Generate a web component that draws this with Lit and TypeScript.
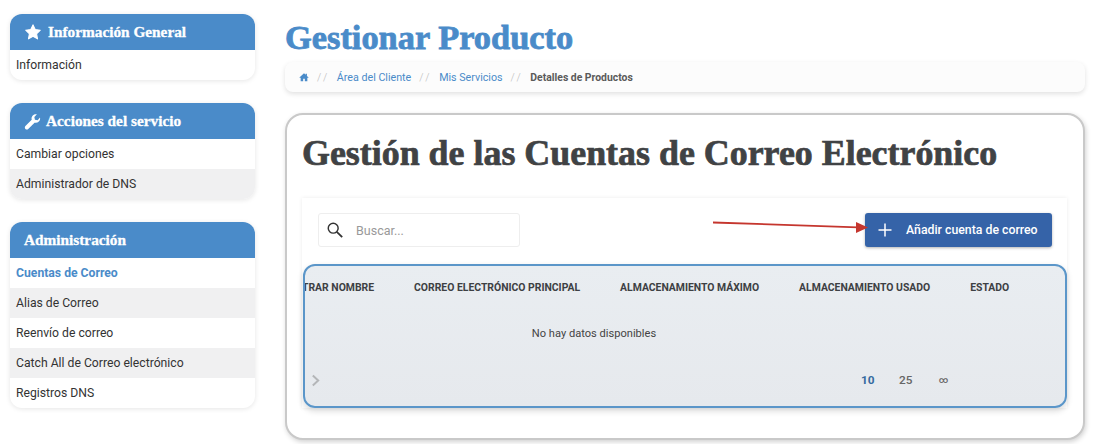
import { LitElement, css, html } from "lit";
import { customElement } from "lit/decorators.js";

interface SideGroup {
  title: string;
  icon?: "star" | "wrench";
  links: string[];
  active?: string;
}

const groups: SideGroup[] = [
  { title: "Información General", icon: "star", links: ["Información"] },
  {
    title: "Acciones del servicio",
    icon: "wrench",
    links: ["Cambiar opciones", "Administrador de DNS"],
  },
  {
    title: "Administración",
    links: [
      "Cuentas de Correo",
      "Alias de Correo",
      "Reenvío de correo",
      "Catch All de Correo electrónico",
      "Registros DNS",
    ],
    active: "Cuentas de Correo",
  },
];

const columns = [
  "REGISTRAR NOMBRE",
  "CORREO ELECTRÓNICO PRINCIPAL",
  "ALMACENAMIENTO MÁXIMO",
  "ALMACENAMIENTO USADO",
  "ESTADO",
];

const starIcon = html`<svg class="head-icon" viewBox="0 0 24 24" width="18" height="18">
  <path fill="#fff" stroke="#fff" stroke-width="1.5" stroke-linejoin="round" d="M12 2.5l2.9 6.3 6.8.8-5 4.7 1.3 6.8-6-3.4-6 3.4 1.3-6.8-5-4.7 6.8-.8z" />
</svg>`;

const wrenchIcon = html`<svg class="head-icon wrench" viewBox="0 0 24 24" width="17" height="17">
  <path fill="#fff" d="M22.6 6.2c.5 2.2-.1 4.4-1.7 5.9-1.6 1.6-3.9 2.1-6 1.5L6 22.5c-1.1 1.1-2.9 1.1-4 0s-1.1-2.9 0-4l8.9-8.9c-.6-2.1-.1-4.400 1.500-6 1.500-1.600 3.700-2.200 5.900-1.700l-3.700 3.700.8 3.900 3.900.8z" />
</svg>`;

@customElement("app-root")
export class AppRoot extends LitElement {
  static styles = css`
    :host {
      display: block;
      width: 1094px;
      height: 444px;
      overflow: hidden;
      background: #fff;
      color: #333;
      font-family: Roboto, "Liberation Sans", sans-serif;
    }

    .page {
      display: grid;
      grid-template-columns: 245px 800px;
      column-gap: 30px;
      padding: 14px 0 0 10px;
    }

    .sidebar {
      display: flex;
      flex-direction: column;
      gap: 23px;
    }

    .side-card {
      border-radius: 12px;
      overflow: hidden;
      background: #fff;
      box-shadow: 0 1px 5px rgb(0 0 0 / 10%);
    }

    .side-head {
      display: flex;
      align-items: center;
      gap: 6px;
      height: 36px;
      padding-left: 14px;
      background: #4a8bc9;
      color: #fff;
      font-family: "Liberation Serif", serif;
      font-size: 15.3px;
      font-weight: 700;
      -webkit-text-stroke: 0.3px #fff;
    }

    .head-icon {
      flex: none;
    }

    .wrench {
      margin-right: -1px;
    }

    .side-link {
      display: flex;
      align-items: center;
      height: 30px;
      padding-left: 6px;
      font-size: 12.2px;
      color: #333;
    }

    .side-link:nth-child(even) {
      background: #f0f0f1;
    }

    .side-link.active {
      color: #4a8bc9;
      font-weight: 700;
    }

    .title {
      margin: 0;
      height: 48px;
      line-height: 46px;
      color: #4a8bc9;
      font-family: "Liberation Serif", serif;
      font-size: 34.4px;
      font-weight: 700;
      -webkit-text-stroke: 0.8px #4a8bc9;
    }

    .crumbs {
      display: flex;
      align-items: center;
      height: 30px;
      padding-left: 14px;
      border-radius: 8px;
      background: #fcfcfc;
      box-shadow: 0 2px 5px rgb(0 0 0 / 12%);
      font-size: 10.7px;
      color: #4a8bc9;
    }

    .crumbs .sep {
      margin: 0 6.5px 0 8px;
      color: #bbb;
      letter-spacing: 3px;
      font-weight: 300;
    }

    .crumbs .current {
      color: #5a5a5a;
      font-size: 10.4px;
      font-weight: 700;
    }

    .card {
      box-sizing: border-box;
      height: 327px;
      margin-top: 21px;
      padding: 20px 17px 0 15px;
      border: 2px solid #c9c9c9;
      border-radius: 18px;
      background: #fff;
      box-shadow: 1px 2px 5px rgb(0 0 0 / 18%);
    }

    .card-title {
      margin: 0;
      height: 63px;
      line-height: 36px;
      color: #404244;
      font-family: "Liberation Serif", serif;
      font-size: 35.9px;
      font-weight: 700;
      white-space: nowrap;
      -webkit-text-stroke: 0.7px #404244;
    }

    .panel {
      position: relative;
      box-shadow: 0 0 4px rgb(0 0 0 / 8%);
      margin-right: -1px;
    }

    .toolbar {
      display: flex;
      align-items: center;
      justify-content: space-between;
      height: 64px;
      padding: 0 15px 1px 16px;
    }

    .search {
      display: flex;
      align-items: center;
      box-sizing: border-box;
      width: 202px;
      height: 34px;
      padding-left: 7px;
      border: 1px solid #eee;
      border-radius: 3px;
      color: #999;
      font-size: 12.5px;
    }

    .search svg {
      margin-right: 12px;
    }

    .add-btn {
      display: flex;
      align-items: center;
      box-sizing: border-box;
      width: 187px;
      height: 34px;
      padding-left: 12px;
      border-radius: 3px;
      background: #3563a8;
      color: #fff;
      font-size: 12.3px;
      font-weight: 500;
      box-shadow: 0 1px 3px rgb(0 0 0 / 30%);
    }

    .add-btn svg {
      margin-right: 13px;
    }

    .arrow {
      position: absolute;
      left: 411px;
      top: 20px;
    }

    .table {
      box-sizing: border-box;
      height: 144px;
      margin-top: 1px;
      margin-left: 1px;
      border: 2px solid #5b96c9;
      border-radius: 12px;
      background: linear-gradient(180deg, #e9edf1, #e6e9ed);
      box-shadow: 0 3px 6px rgb(0 0 0 / 15%);
      overflow: hidden;
    }

    .head-row {
      display: flex;
      align-items: center;
      height: 42px;
      margin-left: -32px;
      color: #3d4043;
      font-size: 10.4px;
      font-weight: 700;
      white-space: nowrap;
    }

    .head-row span {
      flex: none;
      margin-right: 40px;
    }

    .empty {
      height: 51px;
      line-height: 52px;
      padding-right: 182px;
      text-align: center;
      font-size: 11.1px;
      color: #444;
    }

    .pager {
      display: flex;
      align-items: center;
      height: 42px;
      padding-left: 6px;
      font-size: 11.8px;
      font-weight: 500;
      color: #666;
    }

    .pager .sizes {
      display: flex;
      align-items: center;
      gap: 24.5px;
      margin-left: 541px;
    }

    .pager .on {
      color: #356aa0;
      font-weight: 700;
    }

    .pager .all {
      margin-left: 2px;
      font-size: 9px;
    }
  `;

  render() {
    return html`
      <div class="page">
        <aside class="sidebar">
          ${groups.map(
            (g) => html`
              <section class="side-card">
                <div class="side-head">
                  ${g.icon === "star" ? starIcon : g.icon === "wrench" ? wrenchIcon : null}
                  ${g.title}
                </div>
                <div>
                  ${g.links.map(
                    (l) => html`<div class="side-link ${l === g.active ? "active" : ""}">${l}</div>`,
                  )}
                </div>
              </section>
            `,
          )}
        </aside>
        <main>
          <h1 class="title">Gestionar Producto</h1>
          <nav class="crumbs">
            <svg viewBox="0 0 24 24" width="10" height="10">
              <path fill="#4a8bc9" d="M12 3L1 13l1.500 1.500L4 13.200V22h6v-6h4v6h6v-8.800l1.500 1.300L23 13l-4-3.600V4h-3v2.700z" />
            </svg>
            <span class="sep">//</span>
            <span>Área del Cliente</span>
            <span class="sep">//</span>
            <span>Mis Servicios</span>
            <span class="sep">//</span>
            <span class="current">Detalles de Productos</span>
          </nav>
          <section class="card">
            <h2 class="card-title">Gestión de las Cuentas de Correo Electrónico</h2>
            <div class="panel">
              <div class="toolbar">
                <div class="search">
                  <svg viewBox="0 0 20 20" width="18" height="18" fill="none" stroke="#333" stroke-width="1.600">
                    <circle cx="8" cy="8" r="5.500" />
                    <path d="M12 12l6 6" stroke-width="2" />
                  </svg>
                  Buscar...
                </div>
                <div class="add-btn">
                  <svg viewBox="0 0 16 16" width="16" height="16" stroke="#fff" stroke-width="1.500">
                    <path d="M8 1.500v13M1.500 8h13" />
                  </svg>
                  Añadir cuenta de correo
                </div>
              </div>
              <svg class="arrow" width="156" height="20" viewBox="0 0 156 20">
                <path d="M0 4.500L145 9.300" stroke="#c5362e" stroke-width="1.800" />
                <path d="M143 4l12 5.500-12 5.500z" fill="#c5362e" />
              </svg>
              <div class="table">
                <div class="head-row">
                  ${columns.map((c) => html`<span>${c}</span>`)}
                </div>
                <div class="empty">No hay datos disponibles</div>
                <div class="pager">
                  <svg viewBox="0 0 10 14" width="9" height="13" fill="none" stroke="#b4b6b8" stroke-width="2.200">
                    <path d="M2 1.500L8 7l-6 5.500" />
                  </svg>
                  <div class="sizes">
                    <span class="on">10</span><span>25</span><span class="all">∞</span>
                  </div>
                </div>
              </div>
            </div>
          </section>
        </main>
      </div>
    `;
  }
}
